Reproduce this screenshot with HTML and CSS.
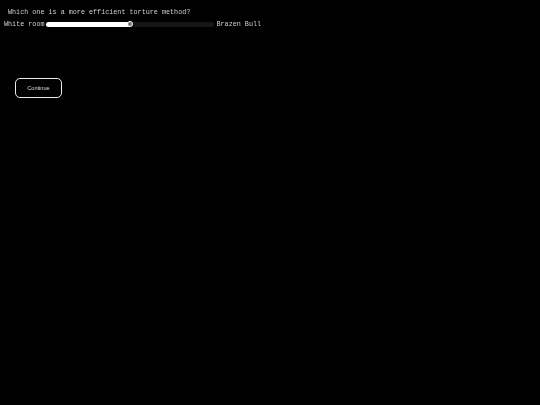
FILE: index.html
```html
<!DOCTYPE html>
<html>
<head>
<meta charset="utf-8">
<link rel="stylesheet" href="styles.css">
</head>
<body>
<div class="page">
  <p class="question">Which one is a more efficient torture method?</p>
  <div class="scale">
    <span class="label">White room</span>
    <div class="track">
      <div class="fill" style="width:50%"></div>
      <div class="thumb" style="left:50%"></div>
    </div>
    <span class="label">Brazen Bull</span>
  </div>
  <button class="continue">Continue</button>
</div>
</body>
</html>
```
FILE: styles.css
```css
html, body {
  margin: 0;
  padding: 0;
  background: #000;
  height: 100%;
}
.page {
  padding: 8px 0 0 4px;
  font-family: "Liberation Mono", "DejaVu Sans Mono", monospace;
  font-size: 6.75px;
  color: #d0d0d0;
}
.question {
  margin: 0 0 0 4px;
  line-height: 8px;
  will-change: transform;
}
.scale {
  display: flex;
  align-items: center;
  margin-top: 4px;
  height: 8px;
  will-change: transform;
}
.label {
  line-height: 8px;
}
.track {
  position: relative;
  width: 168px;
  height: 5px;
  margin: 0 3px 0 1px;
  background: #161616;
  border-radius: 3px;
}
.fill {
  height: 100%;
  background: #fff;
  border-radius: 3px 0 0 3px;
}
.thumb {
  position: absolute;
  top: 50%;
  width: 4px;
  height: 4px;
  margin: -3px 0 0 -3px;
  background: #777;
  border: 1px solid #fff;
  border-radius: 50%;
}
.continue {
  display: block;
  margin: 50px 0 0 11px;
  width: 47px;
  height: 20px;
  padding: 0;
  background: #000;
  color: #ddd;
  border: 1.5px solid #eee;
  border-radius: 5px;
  font-family: "Liberation Sans", Arial, sans-serif;
  font-size: 5.6px;
  will-change: transform;
}
```
